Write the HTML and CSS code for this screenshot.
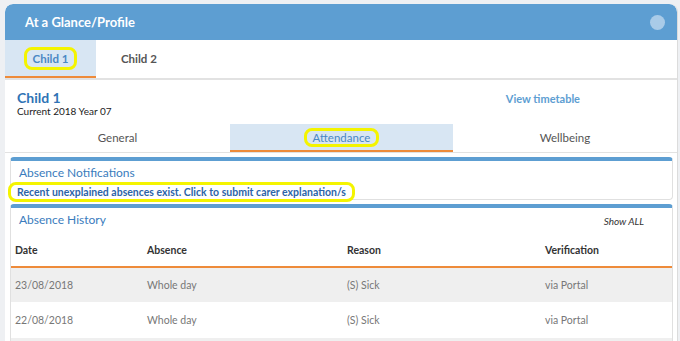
FILE: index.html
```html
<!DOCTYPE html>
<html lang="en">

<head>
    <meta charset="UTF-8">
    <meta name="viewport" content="width=device-width, initial-scale=1.0">
    <title>At a Glance/Profile</title>
    <link rel="stylesheet" href="styles.css">
</head>

<body>
    <div class="panel">
        <div class="panel-head">
            <h2>At a Glance/Profile</h2>
            <span class="head-dot"></span>
        </div>

        <!-- Child selector -->
        <div class="child-tabs">
            <div class="child-tab active"><span class="mark">Child 1</span></div>
            <div class="child-tab">Child 2</div>
        </div>

        <div class="profile">
            <div>
                <div class="child-name">Child 1</div>
                <div class="child-year">Current 2018 Year 07</div>
            </div>
            <a class="timetable-link">View timetable</a>
        </div>

        <div class="sub-tabs">
            <div class="sub-tab">General</div>
            <div class="sub-tab active"><span class="mark">Attendance</span></div>
            <div class="sub-tab">Wellbeing</div>
        </div>

        <div class="box">
            <div class="box-title">Absence Notifications</div>
            <div class="notice"><span class="mark wide">Recent unexplained absences exist. Click to submit carer explanation/s</span></div>
        </div>

        <div class="box history">
            <div class="box-title-row">
                <div class="box-title">Absence History</div>
                <a class="show-all">Show ALL</a>
            </div>
            <table class="absences">
                <thead>
                    <tr>
                        <th class="col-date">Date</th>
                        <th class="col-absence">Absence</th>
                        <th class="col-reason">Reason</th>
                        <th>Verification</th>
                    </tr>
                </thead>
                <tbody>
                    <tr>
                        <td>23/08/2018</td>
                        <td>Whole day</td>
                        <td>(S) Sick</td>
                        <td>via Portal</td>
                    </tr>
                    <tr>
                        <td>22/08/2018</td>
                        <td>Whole day</td>
                        <td>(S) Sick</td>
                        <td>via Portal</td>
                    </tr>
                    <tr>
                        <td></td>
                        <td></td>
                        <td></td>
                        <td></td>
                    </tr>
                </tbody>
            </table>
        </div>
    </div>
</body>

</html>
```

FILE: styles.css
```css
body {
    font-family: 'Lato', 'Open Sans', sans-serif;
    background-color: #eef0f3;
    color: #333;
    margin: 0;
    padding: 4px 2px 0 5px;
    overflow: hidden;
}

.panel {
    background-color: #fff;
    border-right: 1px solid #dcdcdc;
    border-radius: 8px 8px 0 0;
    height: 337px;
    overflow: hidden;
}

.panel-head {
    height: 36px;
    padding: 0 12px 0 20px;
    background-color: #5d9ed2;
    border-radius: 8px 8px 0 0;
    display: flex;
    align-items: center;
    justify-content: space-between;
}

.panel-head h2 {
    margin: 0;
    color: #fff;
    font-size: 13px;
    font-weight: bold;
}

.head-dot {
    width: 15px;
    height: 15px;
    border-radius: 50%;
    background-color: #a9cbe8;
}

.child-tabs {
    display: flex;
    border-bottom: 2px solid #e2e2e2;
}

.child-tab {
    height: 36px;
    padding: 0 25px;
    display: flex;
    align-items: center;
    font-size: 11.5px;
    font-weight: bold;
    color: #555;
    border-bottom: 2px solid transparent;
}

.child-tab.active {
    width: 91px;
    padding: 0;
    justify-content: center;
    background-color: #d8e6f3;
    color: #4a88c4;
    border-bottom-color: #ee8b3a;
}

.mark {
    border: 3px solid #f4f400;
    border-radius: 8px;
    padding: 2px 6px;
}

.profile {
    display: flex;
    justify-content: space-between;
    padding: 10px 97px 0 12px;
    height: 34px;
}

.child-name {
    color: #2f73b5;
    font-size: 14px;
    font-weight: bold;
    line-height: 16px;
}

.child-year {
    font-size: 10px;
    color: #222;
    line-height: 11px;
}

.timetable-link {
    color: #5d9ed2;
    font-size: 11px;
    font-weight: bold;
    line-height: 17px;
}

.sub-tabs {
    display: grid;
    grid-template-columns: 225px 223px 1fr;
    border-bottom: 1px solid #e2e2e2;
}

.sub-tab {
    height: 26px;
    display: flex;
    align-items: center;
    justify-content: center;
    font-size: 11.5px;
    color: #555;
    border-bottom: 2px solid transparent;
}

.sub-tab.active {
    background-color: #d8e6f3;
    color: #4a88c4;
    border-bottom-color: #ee8b3a;
}

.sub-tab .mark {
    padding: 0 6px;
}

.box {
    margin: 4px 4px 0 5px;
    border: 1px solid #e0e0e0;
    border-top: 4px solid #5d9ed2;
    border-radius: 4px;
}

.box-title {
    color: #3a7cbd;
    font-size: 12px;
    padding: 4px 8px 0;
    line-height: 15px;
}

.notice {
    margin: 0 0 0 -3px;
    height: 19px;
}

.notice .mark.wide {
    display: inline-block;
    padding: 1px 6px;
    color: #2c64a8;
    font-size: 10.5px;
    font-weight: bold;
    line-height: 12px;
}

.history {
    margin-top: 4px;
    border-bottom: none;
}

.box-title-row {
    display: flex;
    justify-content: space-between;
    align-items: flex-end;
    padding-right: 28px;
}

.show-all {
    font-size: 10px;
    font-style: italic;
    color: #333;
}

.absences {
    width: 100%;
    border-collapse: collapse;
    margin-top: 6px;
    font-size: 10.5px;
}

.absences th {
    text-align: left;
    font-weight: bold;
    color: #333;
    height: 33px;
    padding: 0 4px;
    border-bottom: 2px solid #ee8b3a;
}

.col-date {
    width: 124px;
}

.col-absence {
    width: 192px;
}

.col-reason {
    width: 190px;
}

.absences td {
    height: 34px;
    padding: 0 4px;
    font-size: 10.5px;
    color: #777;
    border-bottom: 1px solid #fff;
}

.absences tbody tr:nth-child(odd) td {
    background-color: #efefef;
}
```
